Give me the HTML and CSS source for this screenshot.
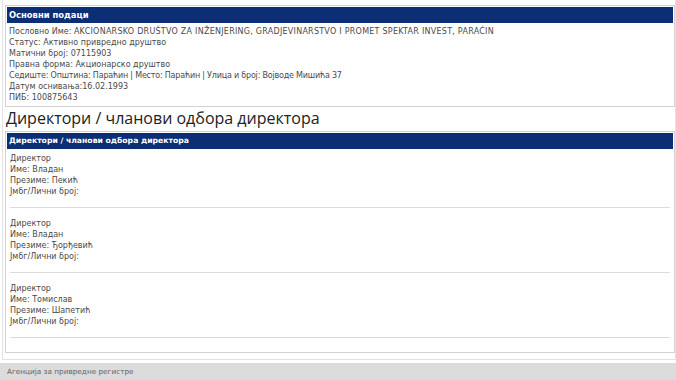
FILE: index.html
```html
<!DOCTYPE html>
<html lang="sr">

<head>
    <meta charset="utf-8">
    <title>Основни подаци</title>
    <link rel="stylesheet" href="styles.css">
</head>

<body>
    <div class="omot">
        <section class="panel">
            <h3 class="naslov">Основни подаци</h3>
            <div class="podaci">
                <p>Пословно Име: <span class="ime">AKCIONARSKO DRUŠTVO ZA INŽENJERING, GRADJEVINARSTVO I PROMET SPEKTAR INVEST, PARAĆIN</span></p>
                <p>Статус: Активно привредно друштво</p>
                <p>Матични број: 07115903</p>
                <p>Правна форма: Акционарско друштво</p>
                <p class="sediste">Седиште: Општина: Параћин | Место: Параћин | Улица и број: Војводе Мишића 37</p>
                <p>Датум оснивања:16.02.1993</p>
                <p>ПИБ: 100875643</p>
            </div>
        </section>

        <h1 class="glavni">Директори / чланови одбора директора</h1>

        <section class="panel">
            <h3 class="naslov uzi">Директори / чланови одбора директора</h3>
            <div class="lista">
                <div class="clan">
                    <p>Директор</p>
                    <p>Име: Владан</p>
                    <p>Презиме: Пекић</p>
                    <p>Јмбг/Лични број:</p>
                </div>
                <div class="clan">
                    <p>Директор</p>
                    <p>Име: Владан</p>
                    <p>Презиме: Ђорђевић</p>
                    <p>Јмбг/Лични број:</p>
                </div>
                <div class="clan">
                    <p>Директор</p>
                    <p>Име: Томислав</p>
                    <p>Презиме: Шапетић</p>
                    <p>Јмбг/Лични број:</p>
                </div>
            </div>
        </section>
    </div>

    <footer>
        <p>Агенција за привредне регистре</p>
    </footer>
</body>

</html>
```

FILE: styles.css
```css
* {
    box-sizing: border-box;
}

body {
    margin: 0;
    background-color: #fff;
    font-family: 'DejaVu Sans', Verdana, sans-serif;
    color: #4a4a4a;
}

p {
    margin: 0;
    font-size: 8px;
    line-height: 11px;
}

.ime {
    letter-spacing: .25px;
}

.sediste {
    letter-spacing: -.2px;
}

.omot {
    margin-left: 2px;
    border: 1px solid #e2e2e2;
    border-top: none;
    padding: 5px 0 6px 2px;
}

.panel {
    border: 1px solid #d2d2d2;
    padding: 1px;
}

.naslov {
    margin: 0;
    height: 16px;
    padding-left: 2px;
    background-color: #0c2e75;
    color: #fff;
    font-size: 8.4px;
    line-height: 16px;
    font-weight: bold;
}

.naslov.uzi {
    font-size: 7.7px;
}

.podaci {
    padding: 3px 2px 2px;
}

.glavni {
    margin: 1px 0 3px 1px;
    font-family: 'Open Sans', 'DejaVu Sans', sans-serif;
    font-size: 16px;
    line-height: 20px;
    font-weight: normal;
    color: #222;
}

.lista {
    padding: 4px 3px 13px;
}

.clan {
    padding: 0 0 10px;
    border-bottom: 1px solid #dcdcdc;
}

.clan + .clan {
    padding-top: 10px;
}

footer {
    margin-top: 3px;
    height: 18px;
    background-color: #dcdcdc;
    padding-left: 7px;
}

footer p {
    font-size: 7.3px;
    line-height: 18px;
    color: #666;
}
```
